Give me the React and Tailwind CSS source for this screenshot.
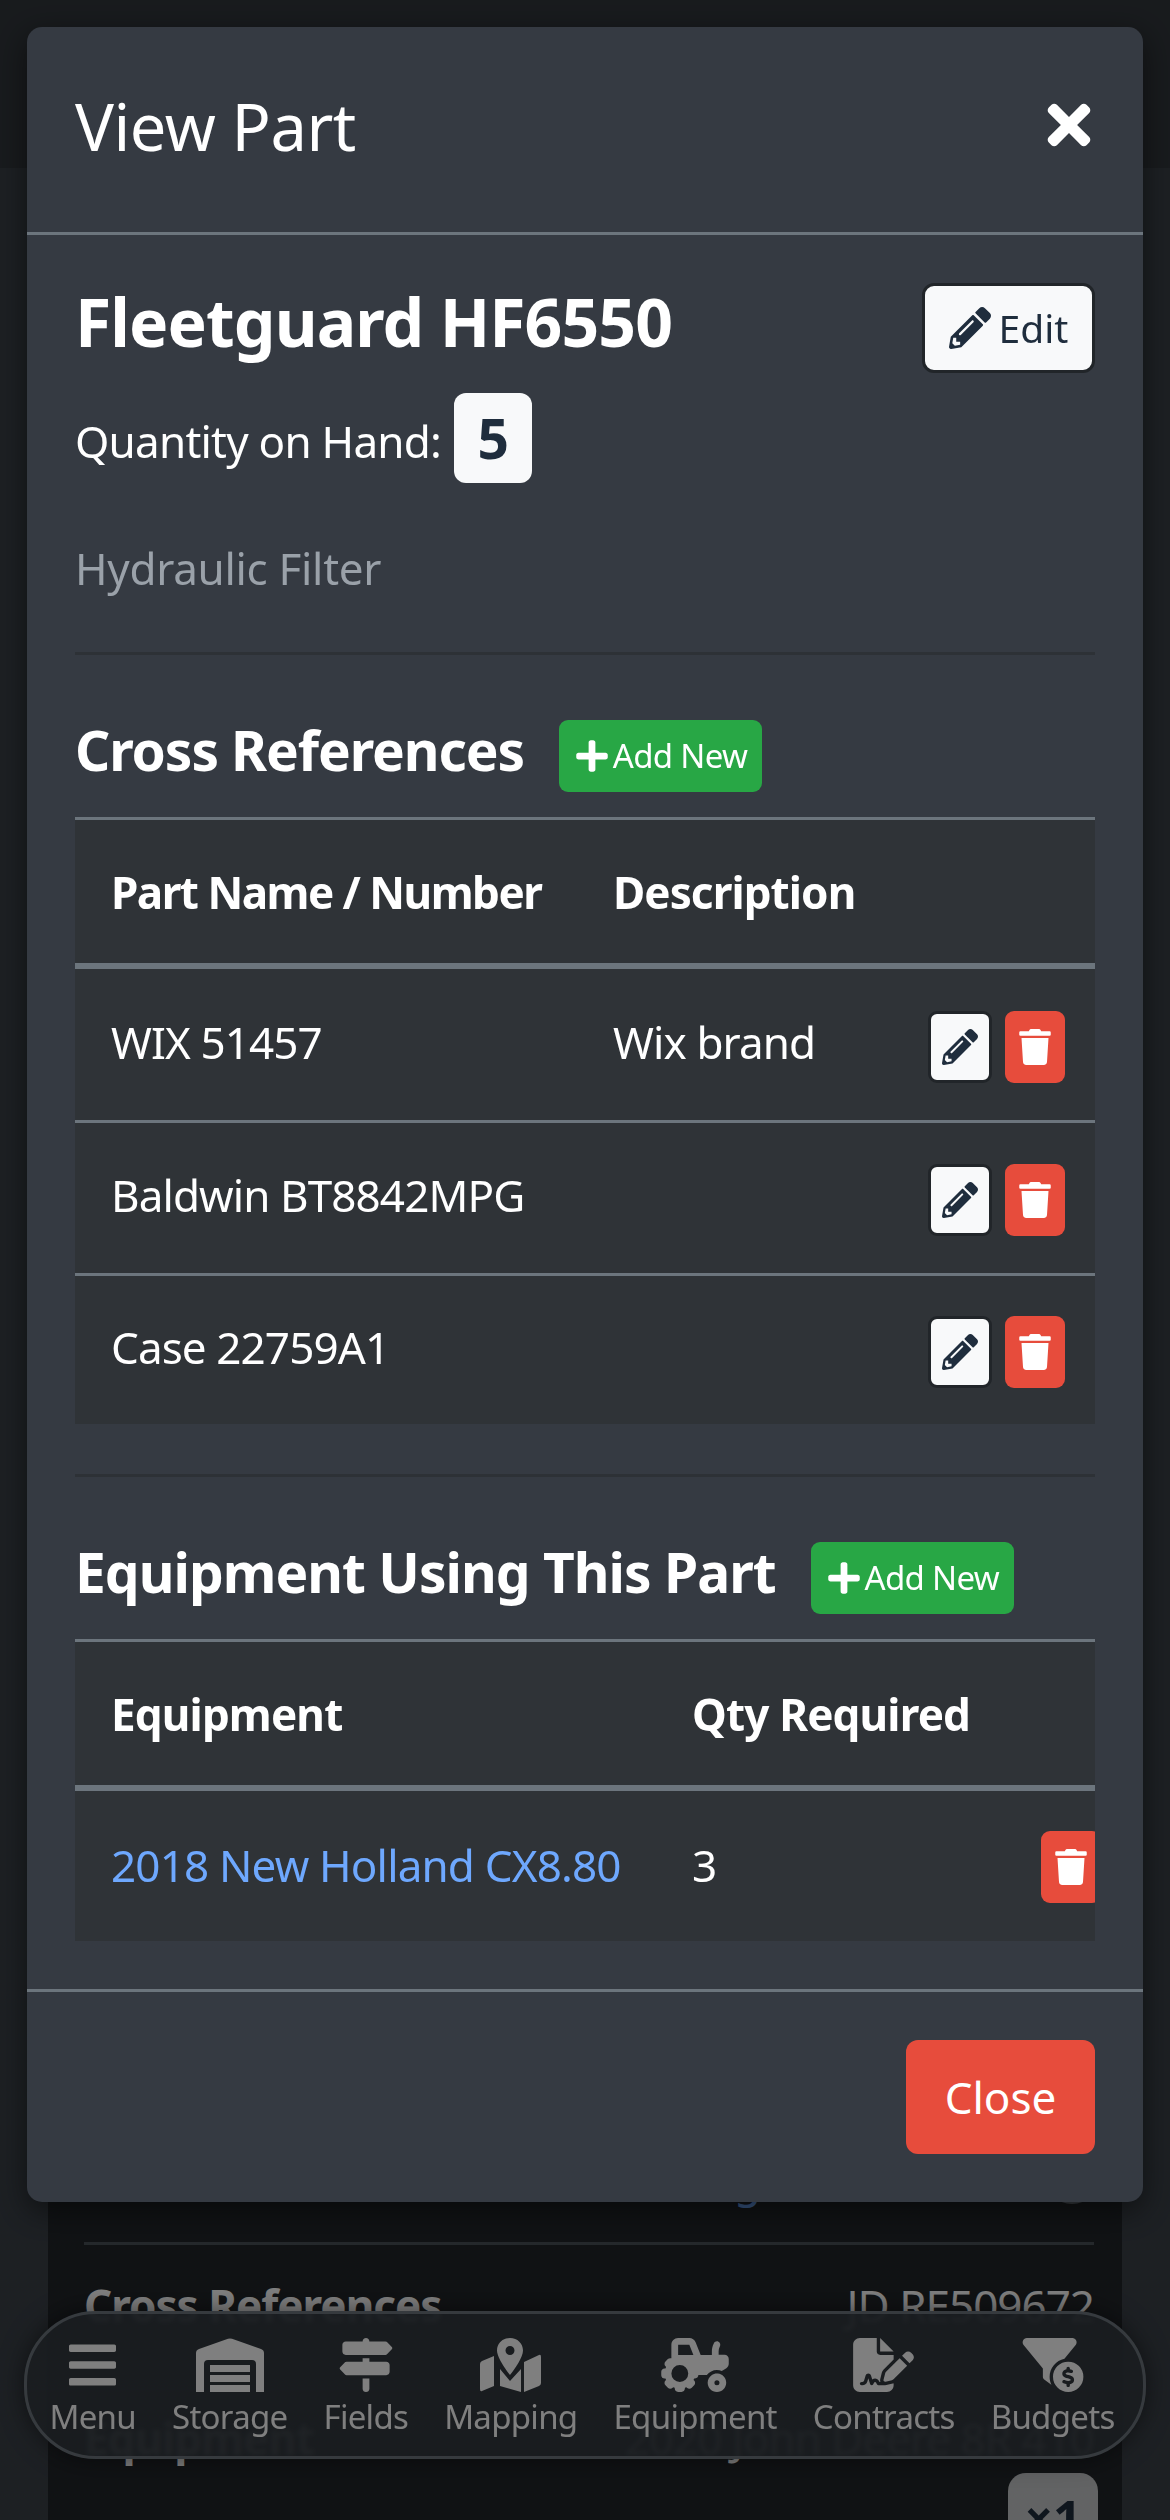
import { FaBars, FaPencilAlt, FaPlus, FaTimes, FaTrash } from "react-icons/fa";
import { FaFileSignature, FaFilterCircleDollar, FaSignsPost, FaTractor } from "react-icons/fa6";

function StorageIcon() {
  return (
    <svg viewBox="0 0 68 54" className="h-[54px] w-[68px]" fill="currentColor">
      <path d="M0 54V15Q0 12 3 11L32 .8Q34 0 36 .8L65 11Q68 12 68 15V54H60V26Q60 22 56 22H12Q8 22 8 26V54Z" />
      <rect x="14" y="27" width="40" height="7" />
      <rect x="14" y="37" width="40" height="7" />
      <rect x="14" y="47" width="40" height="7" />
    </svg>
  );
}

function MappingIcon() {
  return (
    <svg viewBox="0 0 61 54" className="h-[54px] w-[61px]" fill="currentColor">
      <path d="M0 26Q0 24 2 23L14 18V48L2 53Q0 54 0 51Z" />
      <path d="M20 31L30 43L41 31V54L20 48Z" />
      <path d="M44 24L59 17Q61 16 61 19V45Q61 47 59 48L44 54Z" />
      <path fillRule="evenodd" d="M30 0C37.500 0 43 5.500 43 12.500C43 19 35 31 30 37C25 31 17 19 17 12.500C17 5.500 22.500 0 30 0ZM30 8A4.500 4.500 0 1 0 30 17A4.500 4.500 0 1 0 30 8Z" />
    </svg>
  );
}

const navItems = [
  { label: "Menu", icon: <FaBars className="h-[54px] w-[47px]" /> },
  { label: "Storage", icon: <StorageIcon /> },
  { label: "Fields", icon: <FaSignsPost className="h-[54px] w-[54px]" /> },
  { label: "Mapping", icon: <MappingIcon /> },
  { label: "Equipment", icon: <FaTractor className="h-[54px] w-[68px]" /> },
  { label: "Contracts", icon: <FaFileSignature className="h-[54px] w-[61px]" /> },
  { label: "Budgets", icon: <FaFilterCircleDollar className="h-[54px] w-[64px]" /> },
];

function AddButton() {
  return (
    <button className="flex h-[72px] w-[203px] items-center justify-center gap-[3px] rounded-[9px] bg-[#28a745] text-[33px] tracking-[-0.7px] text-white">
      <FaPlus className="h-[36px] w-[36px]" /> Add New
    </button>
  );
}

function EditIconButton() {
  return (
    <button className="flex h-[72px] w-[64px] items-center justify-center rounded-[9px] border-[3px] border-[#212529] bg-[#f8f9fa] text-[#1f2d3d]">
      <FaPencilAlt className="h-[36px] w-[36px]" />
    </button>
  );
}

function TrashButton() {
  return (
    <button className="flex h-[72px] w-[60px] items-center justify-center rounded-[9px] bg-[#e74c3c] text-white">
      <FaTrash className="h-[36px] w-[32px]" />
    </button>
  );
}

const crossRefs = [
  { name: "WIX 51457", desc: "Wix brand", cell: "h-[154px] border-b-[3px]" },
  { name: "Baldwin BT8842MPG", desc: "", cell: "h-[153px] border-b-[3px]" },
  { name: "Case 22759A1", desc: "", cell: "h-[148px]" },
];

export default function App() {
  return (
    <div className="relative h-[2520px] w-[1170px] overflow-hidden bg-[#3a4047] font-['Noto_Sans',sans-serif] text-white">
      {/* page behind the dialog */}
      <div className="h-[168px] bg-[#31363b]" />
      <div className="mx-[48px] h-[2352px] bg-[#212529] pl-[36px] pr-[28px] pt-[1982px]">
        <div className="flex h-[60px] items-start justify-between pl-[650px]">
          <span className="text-[44px] leading-[60px] text-[#6ea8fe]">g</span>
          <span className="mr-[-5px] h-[54px] w-[54px] rounded-full bg-[#6c757d]" />
        </div>
        <div className="mt-[32px] h-[3px] bg-[#495057]" />
        <div className="mt-[30px] flex h-[60px] items-center justify-between text-[44px] tracking-[-1px]">
          <span className="font-bold">Cross References</span>
          <span>JD RE509672</span>
        </div>
        <div className="mt-[73px] flex h-[60px] items-center justify-between text-[44px] tracking-[-1px]">
          <span className="font-bold">Equipment</span>
          <span>2020 John Deere 8R 410</span>
        </div>
        <div className="mt-[5px] flex justify-end">
          <span className="mr-[-4px] flex h-[90px] w-[90px] items-center justify-center rounded-[18px] bg-[#c4c6c8] text-[50px] font-bold text-[#1f2d3d]">×1</span>
        </div>
      </div>

      {/* floating nav */}
      <nav className="absolute left-[24px] top-[2311px] flex h-[148px] w-[1122px] justify-center gap-[36px] rounded-[72px] border-[3px] border-[#6c757d] bg-[#343a40]/95 pr-[6px] pt-[24px] text-[33px] leading-[42px] tracking-[-0.7px] shadow-[0_0_24px_rgba(0,0,0,0.5)] backdrop-blur-[2px]">
        {navItems.map((item) => (
          <div key={item.label} className="flex flex-col items-center gap-[4px]">
            {item.icon}
            <span>{item.label}</span>
          </div>
        ))}
      </nav>

      {/* backdrop */}
      <div className="absolute inset-0 bg-black/50" />

      {/* dialog */}
      <div className="absolute left-[27px] top-[27px] flex h-[2175px] w-[1116px] flex-col rounded-[15px] bg-[#353a42] shadow-[0_9px_30px_rgba(0,0,0,0.5)]">
        <div className="flex h-[208px] items-center justify-between border-b-[3px] border-[#6c757d] pl-[48px] pr-[52px]">
          <h5 className="mb-[6px] text-[65px] tracking-[-0.5px]">View Part</h5>
          <FaTimes className="mb-[10px] h-[62px] w-[44px]" />
        </div>

        <div className="flex flex-1 flex-col px-[48px] pt-[48px]">
          <div className="flex h-[90px] items-center justify-between">
            <h2 className="mb-[14px] text-[66px] font-bold tracking-[-0.9px]">Fleetguard HF6550</h2>
            <button className="flex h-[90px] w-[173px] items-center justify-center gap-[8px] rounded-[12px] border-[3px] border-[#212529] bg-[#f8f9fa] text-[39px] text-[#1f2d3d]">
              <FaPencilAlt className="h-[42px] w-[42px]" /> Edit
            </button>
          </div>
          <div className="mt-[20px] flex h-[90px] items-center gap-[13px]">
            <span className="mt-[6px] text-[44px] tracking-[-0.76px]">Quantity on Hand:</span>
            <span className="flex h-[90px] w-[78px] items-center justify-center rounded-[12px] bg-[#f8f9fa] text-[55px] font-bold text-[#1f2d3d]">5</span>
          </div>
          <p className="mt-[55px] mb-[3px] text-[44px] leading-[60px] tracking-[-0.3px] text-[#9aa1a9]">Hydraulic Filter</p>
          <hr className="mt-[51px] border-t-[3px] border-[#2d3136]" />

          <div className="mt-[65px] flex h-[72px] items-center gap-[35px]">
            <h3 className="mb-[12px] text-[55px] font-bold tracking-[-1.1px]">Cross References</h3>
            <AddButton />
          </div>
          <div className="mt-[25px] overflow-hidden border-t-[3px] border-[#6c757d] bg-[#2f3337]">
            <table className="w-full table-fixed border-separate border-spacing-0 text-left text-[44px] tracking-[-0.9px]">
              <thead>
                <tr>
                  <th className="h-[149px] w-[502px] border-b-[6px] border-[#6c757d] pl-[36px] tracking-[-1.5px]">Part Name / Number</th>
                  <th className="h-[149px] w-[315px] border-b-[6px] border-[#6c757d] pl-[36px]">Description</th>
                  <th className="h-[149px] border-b-[6px] border-[#6c757d]" />
                </tr>
              </thead>
              <tbody>
                {crossRefs.map((row) => (
                  <tr key={row.name}>
                    <td className={`${row.cell} border-[#6c757d] pb-[6px] pl-[36px]`}>{row.name}</td>
                    <td className={`${row.cell} border-[#6c757d] pb-[6px] pl-[36px]`}>{row.desc}</td>
                    <td className={`${row.cell} border-[#6c757d] pl-[36px] pt-[4px]`}>
                      <div className="flex gap-[13px]">
                        <EditIconButton />
                        <TrashButton />
                      </div>
                    </td>
                  </tr>
                ))}
              </tbody>
            </table>
          </div>
          <hr className="mt-[50px] border-t-[3px] border-[#2d3136]" />

          <div className="mt-[65px] flex h-[72px] items-center gap-[35px]">
            <h3 className="mb-[12px] text-[55px] font-bold tracking-[-0.96px]">Equipment Using This Part</h3>
            <AddButton />
          </div>
          <div className="mt-[25px] overflow-hidden border-t-[3px] border-[#6c757d] bg-[#2f3337]">
            <table className="w-[1080px] table-fixed border-separate border-spacing-0 text-left text-[44px] tracking-[-0.83px]">
              <thead>
                <tr>
                  <th className="h-[149px] w-[581px] border-b-[6px] border-[#6c757d] pl-[36px]">Equipment</th>
                  <th className="h-[149px] w-[349px] border-b-[6px] border-[#6c757d] pl-[36px]">Qty Required</th>
                  <th className="h-[149px] border-b-[6px] border-[#6c757d]" />
                </tr>
              </thead>
              <tbody>
                <tr>
                  <td className="h-[150px] pb-[3px] pl-[36px] text-[#6ea8fe]">2018 New Holland CX8.80</td>
                  <td className="h-[150px] pb-[3px] pl-[36px]">3</td>
                  <td className="h-[150px] pl-[36px] pt-[2px]">
                    <TrashButton />
                  </td>
                </tr>
              </tbody>
            </table>
          </div>
        </div>

        <div className="flex justify-end border-t-[3px] border-[#6c757d] px-[48px] py-[48px]">
          <button className="h-[114px] w-[189px] rounded-[12px] bg-[#e74c3c] text-[44px]">Close</button>
        </div>
      </div>
    </div>
  );
}
